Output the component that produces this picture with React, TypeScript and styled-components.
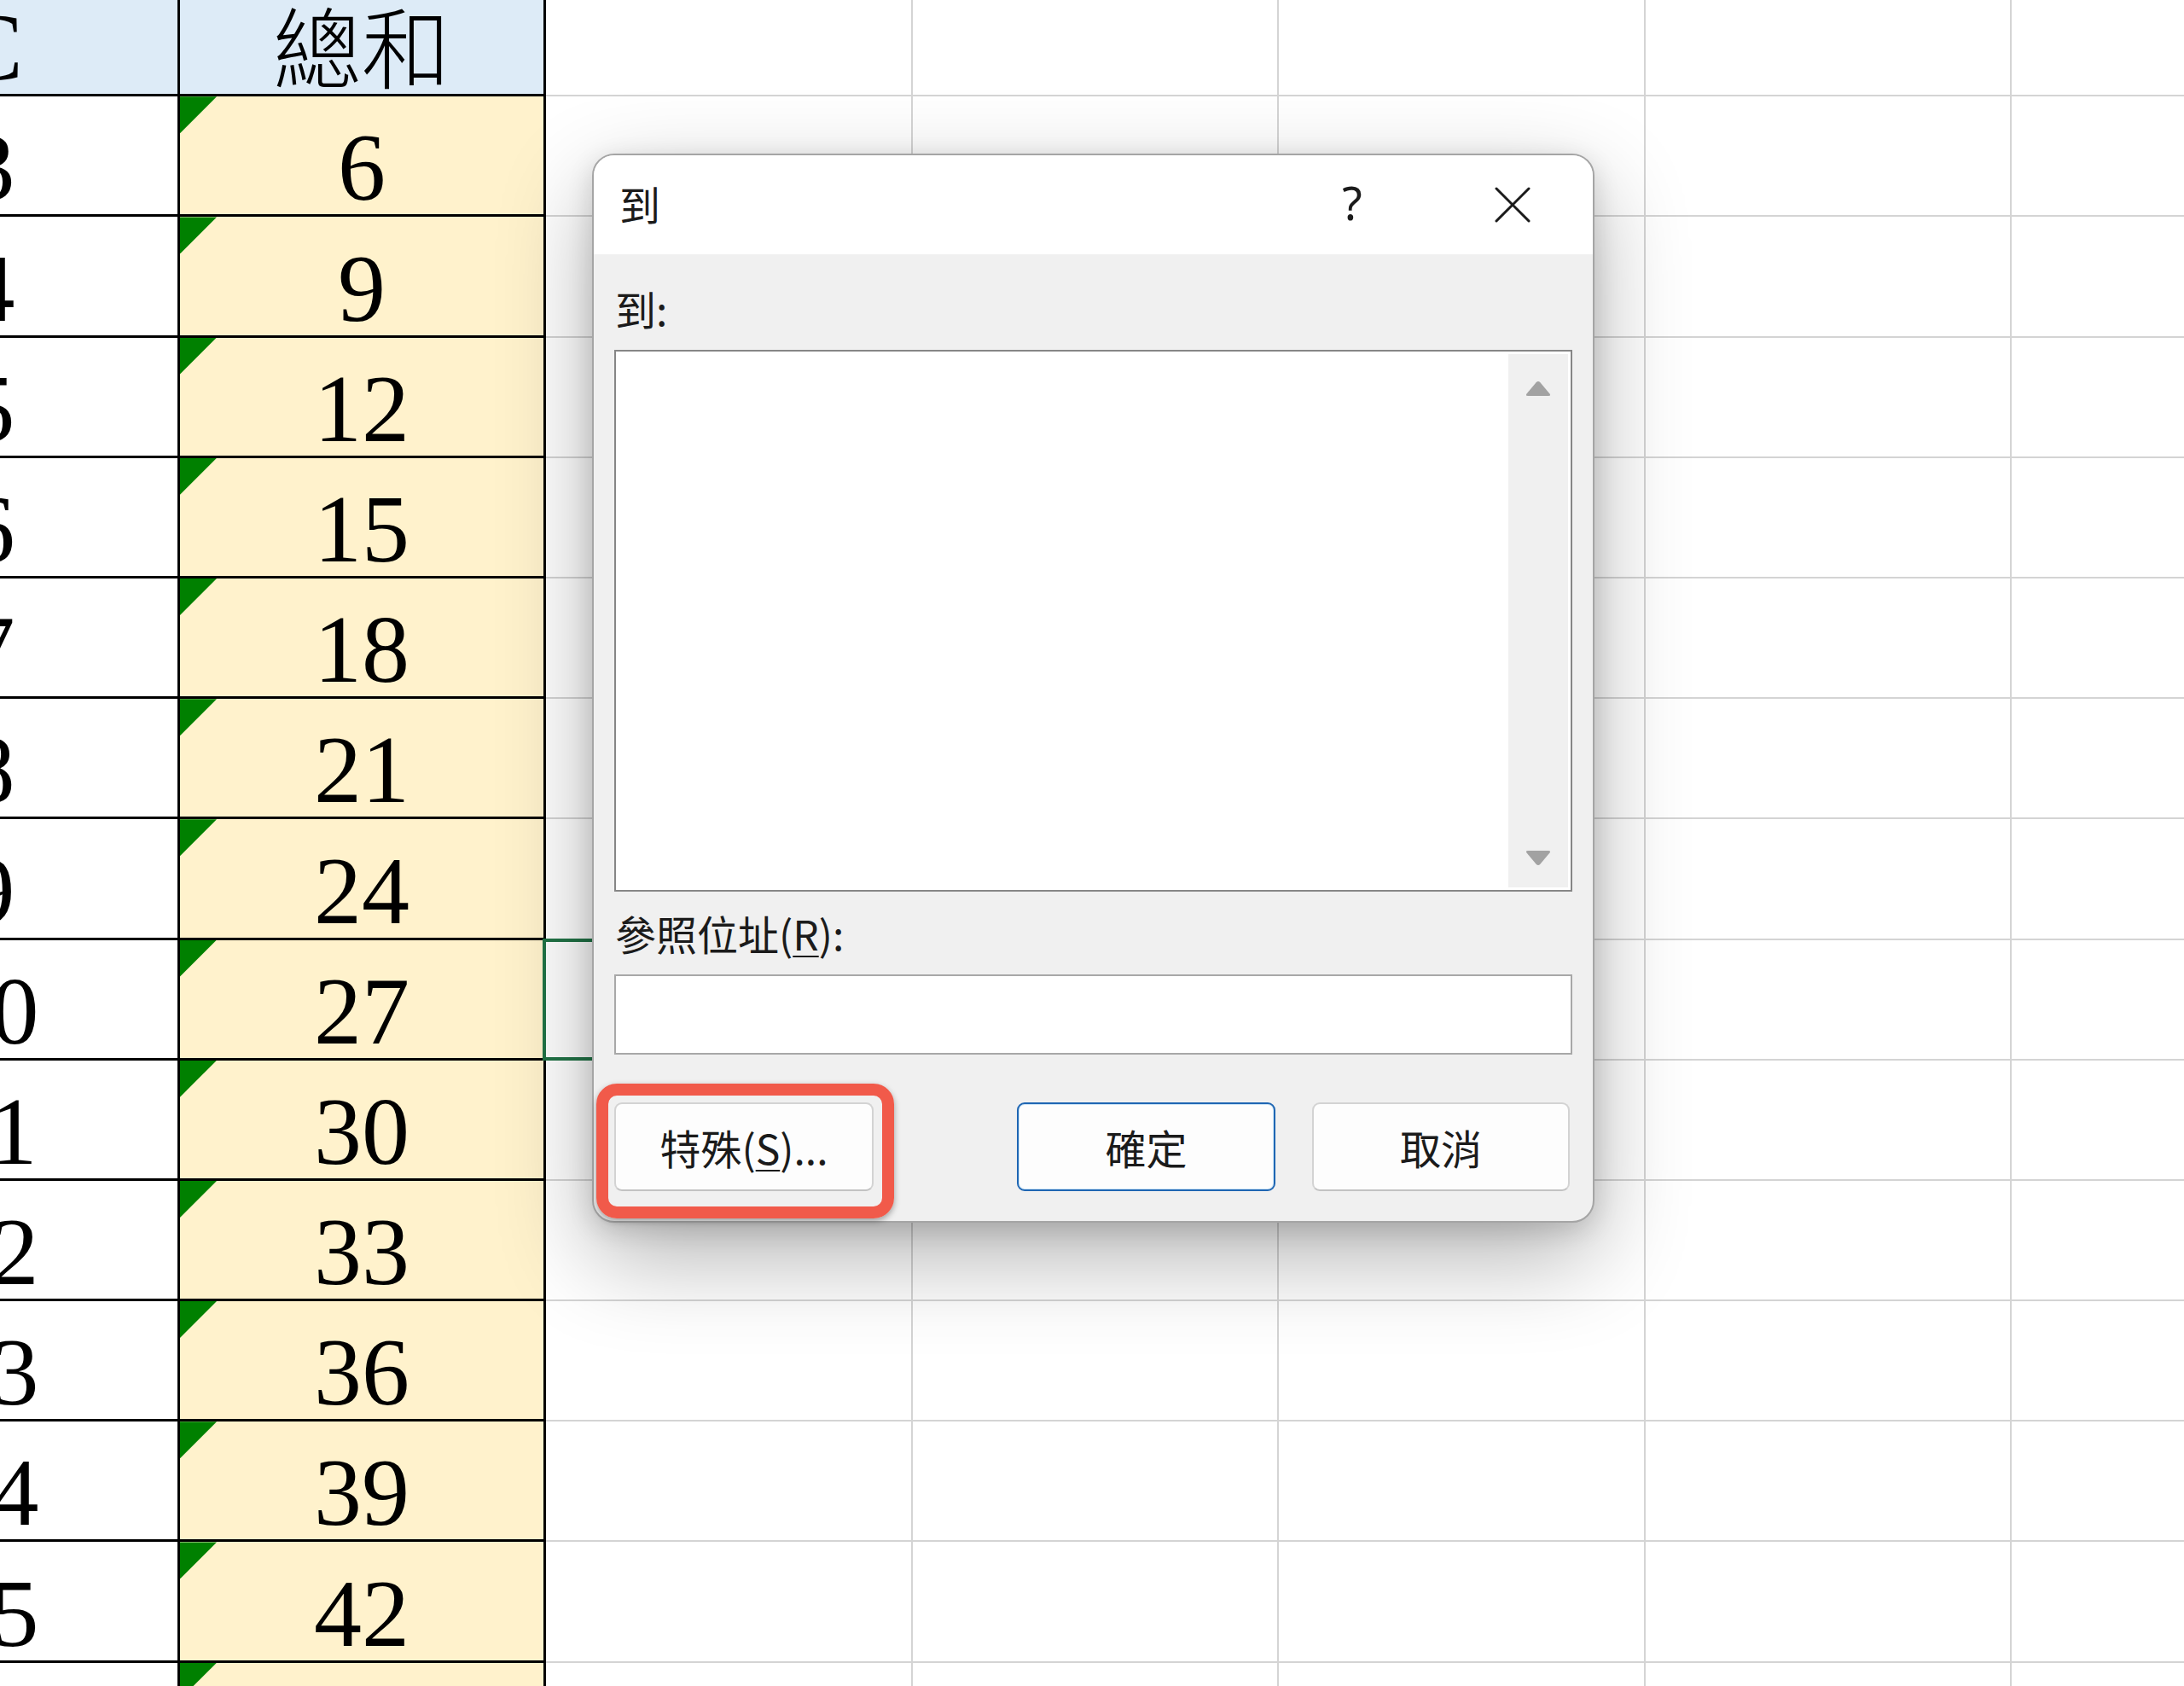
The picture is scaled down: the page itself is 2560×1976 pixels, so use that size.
import React from 'react'
import styled, { createGlobalStyle, css } from 'styled-components'

const GlobalStyle = createGlobalStyle`
    html,
    body {
        margin: 0;
        padding: 0;
        background: #ffffff;
    }
`

const Page = styled.div`
    position: relative;
    width: 2560px;
    height: 1976px;
    overflow: hidden;
    background: #ffffff;
`

const Sheet = styled.div`
    display: grid;
    grid-template-columns: 440px 429px repeat(5, 429.5px);
    grid-auto-rows: 141.2px;
    margin-left: -229px;
    margin-top: -28px;
    font-family: 'Liberation Serif', 'Noto Sans CJK TC', serif;
    color: #000000;
`

type Kind = 'head' | 'sumHead' | 'value' | 'sum' | 'empty'

const Cell = styled.div<{ $kind: Kind; $selected?: boolean }>`
    position: relative;
    box-sizing: border-box;
    display: flex;
    align-items: flex-end;
    justify-content: center;
    font-size: 112px;
    line-height: 110px;
    border-right: 3px solid #000000;
    border-bottom: 3px solid #000000;
    background: #ffffff;

    ${p =>
        p.$kind === 'head' &&
        css`
            background: #ddebf7;
        `}

    ${p =>
        p.$kind === 'sumHead' &&
        css`
            background: #ddebf7;
            font-family: 'Noto Sans CJK TC', sans-serif;
            font-weight: 300;
            font-size: 104px;
            line-height: 104px;
            padding-bottom: 6px;
        `}

    ${p =>
        p.$kind === 'sum' &&
        css`
            background: #fff2cc;

            &::before {
                content: '';
                position: absolute;
                left: 0;
                top: 0;
                width: 43px;
                height: 43px;
                background: #008000;
                clip-path: polygon(0 0, 100% 0, 0 100%);
            }
        `}

    ${p =>
        p.$kind === 'empty' &&
        css`
            border-right: 2px solid #d4d4d4;
            border-bottom: 2px solid #d4d4d4;
        `}

    ${p =>
        p.$selected &&
        css`
            &::after {
                content: '';
                position: absolute;
                left: -4px;
                top: -2px;
                right: -2px;
                bottom: -2px;
                border: 4px solid #217346;
            }
        `}
`

const Dialog = styled.div`
    position: absolute;
    left: 694px;
    top: 180px;
    width: 1175px;
    height: 1253px;
    box-sizing: border-box;
    display: flex;
    flex-direction: column;
    border: 2px solid #a5a5a5;
    border-radius: 26px;
    background: #f0f0f0;
    box-shadow: 0 40px 110px rgba(0, 0, 0, 0.3), 0 8px 30px rgba(0, 0, 0, 0.14);
    font-family: 'Noto Sans CJK TC', 'Noto Sans', sans-serif;
    color: #1b1b1b;
`

const TitleBar = styled.div`
    display: flex;
    align-items: center;
    height: 116px;
    padding: 0 54px 0 30px;
    background: #ffffff;
    border-radius: 24px 24px 0 0;
`

const Title = styled.div`
    flex: 1;
    font-size: 48px;
    line-height: 60px;
    margin-top: -4px;
`

const TitleAction = styled.div`
    width: 80px;
    height: 80px;
    display: flex;
    align-items: center;
    justify-content: center;
`

const HelpGlyph = styled.span`
    font-family: 'Noto Sans', sans-serif;
    font-weight: 400;
    font-size: 54px;
    line-height: 60px;
    margin-bottom: 6px;
`

const TitleGap = styled.div`
    width: 108px;
`

const Body = styled.div`
    flex: 1;
    display: flex;
    flex-direction: column;
    padding: 33px 24px 35px;
`

const Label = styled.div`
    font-size: 48px;
    line-height: 60px;
    height: 60px;
    padding-left: 1px;
`

const Underline = styled.span`
    text-decoration: underline;
    text-decoration-thickness: 2px;
    text-underline-offset: 6px;
`

const ListBox = styled.div`
    box-sizing: border-box;
    height: 635px;
    margin-top: 19px;
    padding: 3px;
    display: flex;
    justify-content: flex-end;
    border: 2px solid #868686;
    background: #ffffff;
`

const ScrollTrack = styled.div`
    width: 70px;
    display: flex;
    flex-direction: column;
    align-items: center;
    justify-content: space-between;
    padding: 30px 0 24px;
    background: #f0f0f0;
`

const InputBox = styled.div`
    box-sizing: border-box;
    height: 94px;
    margin-top: 19px;
    border: 2px solid #a8a8a8;
    background: #ffffff;
`

const SecondLabel = styled(Label)`
    margin-top: 18px;
`

const ButtonRow = styled.div`
    display: flex;
    justify-content: space-between;
    margin-top: 56px;
    padding-right: 3px;
`

const ButtonGroup = styled.div`
    display: flex;
    gap: 43px;
`

const Highlight = styled.div`
    position: relative;

    &::after {
        content: '';
        position: absolute;
        left: -21px;
        top: -22px;
        right: -24px;
        bottom: -32px;
        border: 14px solid #f15a4a;
        border-radius: 24px;
        box-shadow: 0 3px 7px rgba(0, 0, 0, 0.35);
        pointer-events: none;
    }
`

const Button = styled.div<{ $primary?: boolean; $width: number }>`
    box-sizing: border-box;
    width: ${p => p.$width}px;
    height: 104px;
    display: flex;
    align-items: center;
    justify-content: center;
    font-size: 48px;
    background: #fdfdfd;
    border: 2px solid #d3d3d3;
    border-bottom-color: #c2c2c2;
    border-radius: 9px;

    ${p =>
        p.$primary &&
        css`
            border: 2px solid #1f66b3;
            box-shadow: inset 0 0 0 1px #cde6f8;
        `}
`

const ArrowUp = () => (
    <svg width="32" height="22" viewBox="0 0 32 22">
        <path
            d="M13.6 3.2 Q16 0.6 18.4 3.2 L29.5 16.5 Q31.2 19 28 19 L4 19 Q0.8 19 2.5 16.5 Z"
            fill="#a2a2a2"
        />
    </svg>
)

const ArrowDown = () => (
    <svg width="32" height="22" viewBox="0 0 32 22">
        <path
            d="M13.6 18.8 Q16 21.4 18.4 18.8 L29.5 5.5 Q31.2 3 28 3 L4 3 Q0.8 3 2.5 5.5 Z"
            fill="#a2a2a2"
        />
    </svg>
)

const CloseIcon = () => (
    <svg width="42" height="42" viewBox="0 0 42 42">
        <path
            d="M2 2 L40 40 M40 2 L2 40"
            stroke="#1b1b1b"
            strokeWidth="3"
            strokeLinecap="round"
        />
    </svg>
)

const rows = Array.from({ length: 14 }, (_, i) => i + 3)

const App = () => {
    return (
        <Page>
            <GlobalStyle />
            <Sheet>
                <Cell $kind="head">C</Cell>
                <Cell $kind="sumHead">總和</Cell>
                {[0, 1, 2, 3, 4].map(i => (
                    <Cell key={`h${i}`} $kind="empty" />
                ))}
                {rows.map(c => (
                    <React.Fragment key={c}>
                        <Cell $kind="value">{c}</Cell>
                        <Cell $kind="sum">{3 * (c - 1)}</Cell>
                        {[0, 1, 2, 3, 4].map(i => (
                            <Cell
                                key={i}
                                $kind="empty"
                                $selected={c === 10 && i === 0}
                            />
                        ))}
                    </React.Fragment>
                ))}
            </Sheet>

            <Dialog>
                <TitleBar>
                    <Title>到</Title>
                    <TitleAction>
                        <HelpGlyph>?</HelpGlyph>
                    </TitleAction>
                    <TitleGap />
                    <TitleAction>
                        <CloseIcon />
                    </TitleAction>
                </TitleBar>
                <Body>
                    <Label>到:</Label>
                    <ListBox>
                        <ScrollTrack>
                            <ArrowUp />
                            <ArrowDown />
                        </ScrollTrack>
                    </ListBox>
                    <SecondLabel>
                        參照位址(<Underline>R</Underline>):
                    </SecondLabel>
                    <InputBox />
                    <ButtonRow>
                        <Highlight>
                            <Button $width={304}>
                                特殊(<Underline>S</Underline>)...
                            </Button>
                        </Highlight>
                        <ButtonGroup>
                            <Button $primary $width={303}>
                                確定
                            </Button>
                            <Button $width={302}>取消</Button>
                        </ButtonGroup>
                    </ButtonRow>
                </Body>
            </Dialog>
        </Page>
    )
}

export default App
